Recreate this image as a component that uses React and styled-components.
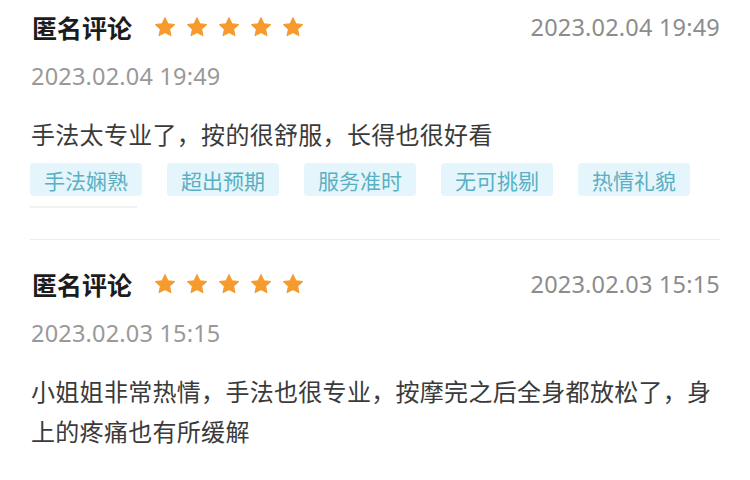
import React from "react";
import styled, { createGlobalStyle } from "styled-components";

const Global = createGlobalStyle`
  html, body { margin: 0; padding: 0; background: #fff; }
  body { font-family: "Noto Sans CJK SC", "Noto Sans", sans-serif; }
`;

const Page = styled.div`
  width: 750px;
  height: 480px;
  overflow: hidden;
  padding: 0 30px 0 31px;
  box-sizing: border-box;
`;

const Review = styled.section`
  padding-top: ${(p) => (p.$first ? "12px" : "29px")};
`;

const Header = styled.div`
  display: flex;
  align-items: center;
  height: 30px;
`;

const Name = styled.div`
  font-size: 25px;
  font-weight: 700;
  color: #1c1c1c;
  line-height: 30px;
  margin-right: 22px;
  margin-left: 1px;
`;

const Stars = styled.div`
  display: flex;
  gap: 10px;
  align-items: center;
`;

const DateText = styled.div`
  font-family: "Noto Sans", sans-serif;
  font-size: 23.5px;
  color: ${(p) => p.$color || "#8c8c8c"};
  line-height: 30px;
  letter-spacing: 0.2px;
`;

const RightDate = styled(DateText)`
  margin-left: auto;
`;

const SubDate = styled(DateText)`
  margin-top: 19px;
`;

const Comment = styled.p`
  margin: 23px 0 0;
  font-size: 24px;
  letter-spacing: 0.3px;
  line-height: 40px;
  color: #3a3a3a;
`;

const Tags = styled.div`
  display: flex;
  gap: 25px;
  margin-top: 9px;
  margin-left: -1px;
`;

const Tag = styled.span`
  display: inline-flex;
  align-items: center;
  justify-content: center;
  height: 33px;
  padding: 0 14px;
  background: #e4f5fb;
  color: #5ab0c3;
  font-size: 21px;
  border-radius: 4px;
`;

const ScrollHint = styled.div`
  width: 107px;
  height: 2px;
  background: #f1f1f1;
  margin-top: 10px;
  margin-left: -1px;
`;

const Divider = styled.hr`
  border: none;
  height: 1px;
  background: #ececec;
  margin: 31px 0 0 -1px;
`;

const Star = () => (
  <svg width="22" height="22" viewBox="0 0 24 24">
    <path
      d="M12 1.8l3.1 6.6 7.2.9-5.3 5 1.4 7.1L12 17.9l-6.4 3.5 1.4-7.1-5.3-5 7.2-.9z"
      fill="#f79a2c"
      stroke="#f79a2c"
      strokeWidth="1.2"
      strokeLinejoin="round"
    />
  </svg>
);

const reviews = [
  {
    date: "2023.02.04 19:49",
    text: "手法太专业了，按的很舒服，长得也很好看",
    tags: ["手法娴熟", "超出预期", "服务准时", "无可挑剔", "热情礼貌"],
  },
  {
    date: "2023.02.03 15:15",
    text: "小姐姐非常热情，手法也很专业，按摩完之后全身都放松了，身上的疼痛也有所缓解",
    tags: [],
  },
];

export default function App() {
  return (
    <>
      <Global />
      <Page>
        {reviews.map((r, i) => (
          <React.Fragment key={i}>
            <Review $first={i === 0}>
              <Header>
                <Name>匿名评论</Name>
                <Stars>
                  {[0, 1, 2, 3, 4].map((s) => (
                    <Star key={s} />
                  ))}
                </Stars>
                <RightDate>{r.date}</RightDate>
              </Header>
              <SubDate $color="#999">{r.date}</SubDate>
              <Comment>{r.text}</Comment>
              {r.tags.length > 0 && (
                <>
                  <Tags>
                    {r.tags.map((t) => (
                      <Tag key={t}>{t}</Tag>
                    ))}
                  </Tags>
                  <ScrollHint />
                </>
              )}
            </Review>
            {i < reviews.length - 1 && <Divider />}
          </React.Fragment>
        ))}
      </Page>
    </>
  );
}
